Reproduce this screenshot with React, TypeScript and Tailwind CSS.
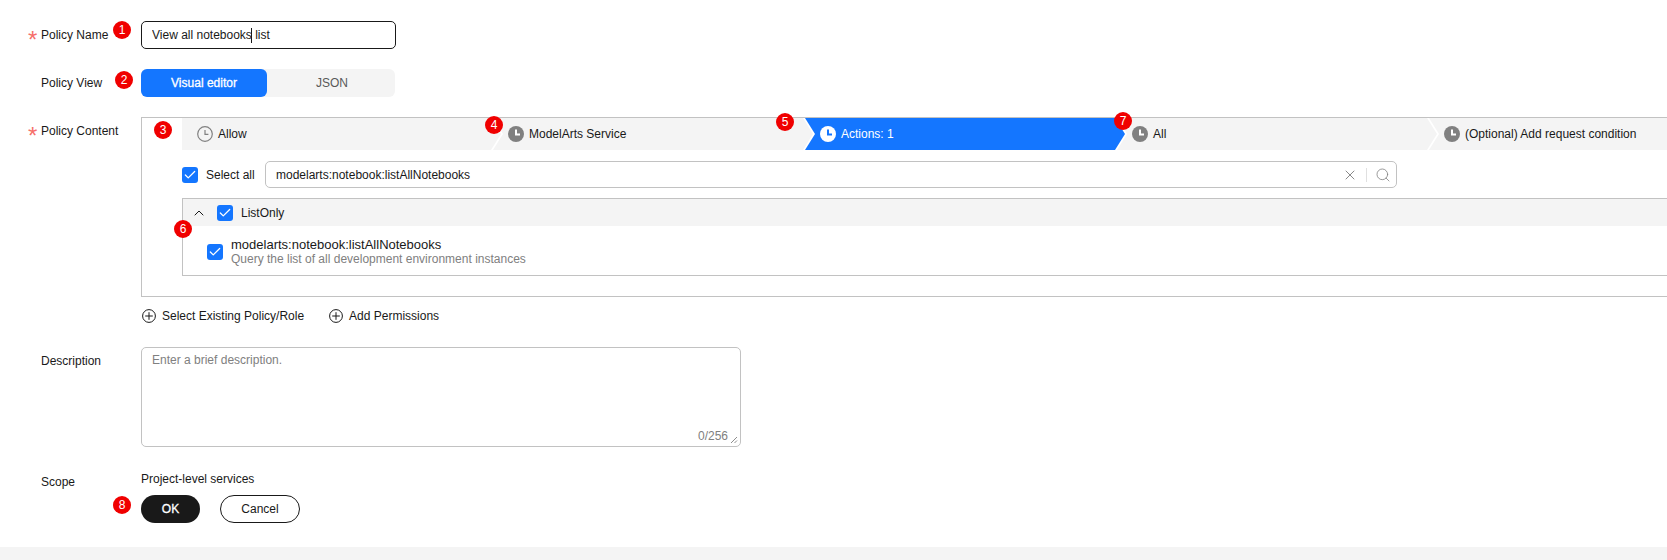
import { Check, ChevronUp, Search, X } from "lucide-react";

const NOTCHED =
  "[clip-path:polygon(0_0,calc(100%_-_10px)_0,100%_50%,calc(100%_-_10px)_100%,0_100%,10px_50%)]";
const FIRST =
  "[clip-path:polygon(0_0,calc(100%_-_10px)_0,100%_50%,calc(100%_-_10px)_100%,0_100%)]";

// Numbered callouts laid over the form
const badges = [
  { n: 1, cls: "left-[113px] top-[21px]" },
  { n: 2, cls: "left-[115px] top-[71px]" },
  { n: 3, cls: "left-[154px] top-[121px]" },
  { n: 4, cls: "left-[485px] top-[116px]" },
  { n: 5, cls: "left-[776px] top-[113px]" },
  { n: 6, cls: "left-[174px] top-[220px]" },
  { n: 7, cls: "left-[1114px] top-[112px]" },
  { n: 8, cls: "left-[113px] top-[496px]" },
];

const Clock = ({ variant = "filled" }: { variant?: "filled" | "outline" | "active" }) => {
  if (variant === "outline") {
    return (
      <svg width="16" height="16" viewBox="0 0 16 16" fill="none" className="shrink-0">
        <circle cx="8" cy="8" r="7.3" stroke="#808080" strokeWidth="1.2" />
        <path d="M8 4v4.4h3.4" stroke="#808080" strokeWidth="1.2" />
      </svg>
    );
  }
  const active = variant === "active";
  return (
    <svg width="16" height="16" viewBox="0 0 16 16" fill="none" className="shrink-0">
      <circle cx="8" cy="8" r="8" fill={active ? "#ffffff" : "#808080"} />
      <path d="M8 3.6v5h4" stroke={active ? "#1476ff" : "#ffffff"} strokeWidth="2" />
    </svg>
  );
};

const Checkbox = () => (
  <span className="flex h-4 w-4 shrink-0 items-center justify-center rounded-[3px] bg-[#1476ff]">
    <Check size={14} color="#ffffff" strokeWidth={2.2} />
  </span>
);

const PlusCircle = () => (
  <svg width="14" height="14" viewBox="0 0 14 14" fill="none" className="shrink-0">
    <circle cx="7" cy="7" r="6.4" stroke="#191919" strokeWidth="1" />
    <path d="M7 3.2v7.6M3.2 7h7.6" stroke="#191919" strokeWidth="1" />
  </svg>
);

const Label = ({ text, required }: { text: string; required?: boolean }) => (
  <div className="flex w-[141px] shrink-0 pl-[28px]">
    <span className="flex w-[13px] shrink-0 justify-start text-[24px] leading-[18px] text-[#f66f6a]">
      {required ? <span className="translate-y-[5px]">*</span> : null}
    </span>
    <span className="leading-[18px]">{text}</span>
  </div>
);

const Steps = () => (
  <div className="flex h-8 pl-10">
    <div className={`-mr-2 flex w-[319px] shrink-0 items-center gap-[5px] bg-[#f4f4f4] pl-[15px] ${FIRST}`}>
      <Clock variant="outline" />
      <span>Allow</span>
    </div>
    <div className={`-mr-2 flex w-[320px] shrink-0 items-center gap-[5px] bg-[#f4f4f4] pl-[15px] ${NOTCHED}`}>
      <Clock />
      <span>ModelArts Service</span>
    </div>
    <div className={`-mr-2 flex w-[320px] shrink-0 items-center gap-[5px] bg-[#1476ff] pl-[15px] text-white ${NOTCHED}`}>
      <Clock variant="active" />
      <span>Actions: 1</span>
    </div>
    <div className={`-mr-2 flex w-[320px] shrink-0 items-center gap-[5px] bg-[#f4f4f4] pl-[15px] ${NOTCHED}`}>
      <Clock />
      <span>All</span>
    </div>
    <div className={`-mr-2 flex w-[320px] shrink-0 items-center gap-[5px] bg-[#f4f4f4] pl-[15px] ${NOTCHED}`}>
      <Clock />
      <span>(Optional) Add request condition</span>
    </div>
  </div>
);

export default function App() {
  return (
    <div className="relative flex h-[560px] flex-col overflow-hidden bg-white font-['Liberation_Sans',Arial,sans-serif] text-[12px] text-[#191919]">
      <main className="flex-1 pt-[21px]">
        {/* Policy name */}
        <div className="flex items-center">
          <Label text="Policy Name" required />
          <div className="relative h-7 w-[255px]">
            <input
              readOnly
              value="View all notebooks list"
              className="h-full w-full rounded-[5px] border border-[#191919] pl-[10px] outline-none"
            />
            <span className="absolute left-[110px] top-[7px] h-[15px] w-px bg-[#191919]" />
          </div>
        </div>

        {/* Policy view */}
        <div className="mt-5 flex items-center">
          <Label text="Policy View" />
          <div className="flex h-7 w-[254px] gap-[2px] rounded-[6px] bg-[#f4f4f4]">
            <button className="h-full w-[126px] rounded-[6px] bg-[#1476ff] text-white [-webkit-text-stroke:0.3px_#ffffff]">Visual editor</button>
            <button className="h-full flex-1 text-[#595959]">JSON</button>
          </div>
        </div>

        {/* Policy content */}
        <div className="mt-5 flex">
          <div className="pt-[5px]">
            <Label text="Policy Content" required />
          </div>
          <div className="-mr-[40px] h-[180px] min-w-0 flex-1 overflow-hidden border border-[#c2c2c2]">
            <Steps />
            <div className="mt-[11px] flex h-[27px] items-center pl-10">
              <Checkbox />
              <span className="ml-[8px] w-[59px] shrink-0">Select all</span>
              <div className="flex h-full w-[1132px] items-center rounded-[5px] border border-[#c2c2c2] pl-[10px] pr-[4px]">
                <span className="flex-1">modelarts:notebook:listAllNotebooks</span>
                <X size={16} color="#6b6b6b" strokeWidth={1.2} />
                <span className="mx-[8px] h-[14px] w-px bg-[#e0e0e0]" />
                <Search size={16} color="#808080" strokeWidth={1.2} className="mr-[1px]" />
              </div>
            </div>
            <div className="ml-10 mt-[10px] h-[78px] border border-[#c2c2c2]">
              <div className="flex h-[27px] items-center bg-[#f4f4f4] pl-[8px]">
                <ChevronUp size={16} color="#191919" strokeWidth={1.5} />
                <span className="ml-[10px]"><Checkbox /></span>
                <span className="ml-2">ListOnly</span>
              </div>
              <div className="flex items-center pl-6 pt-[11px]">
                <Checkbox />
                <div className="ml-2">
                  <div className="text-[13px] leading-[15px]">modelarts:notebook:listAllNotebooks</div>
                  <div className="leading-[14px] text-[#808080]">Query the list of all development environment instances</div>
                </div>
              </div>
            </div>
          </div>
        </div>

        {/* Extra actions */}
        <div className="ml-[142px] mt-[11px] flex h-4 items-center">
          <PlusCircle />
          <span className="ml-[6px]">Select Existing Policy/Role</span>
          <span className="ml-[25px]"><PlusCircle /></span>
          <span className="ml-[6px]">Add Permissions</span>
        </div>

        {/* Description */}
        <div className="mt-[23px] flex">
          <div className="pt-[5px]">
            <Label text="Description" />
          </div>
          <div className="relative h-[100px] w-[600px]">
            <textarea
              readOnly
              placeholder="Enter a brief description."
              className="h-full w-full resize-none rounded-[5px] border border-[#c2c2c2] px-[10px] py-[3px] leading-[18px] outline-none placeholder:text-[#808080]"
            />
            <span className="absolute bottom-[2px] right-[13px] text-[#808080]">0/256</span>
            <svg width="8" height="8" viewBox="0 0 8 8" fill="none" className="absolute bottom-[3px] right-[3px]">
              <path d="M1 7l6-6M4.5 7L7 4.5" stroke="#808080" strokeWidth="0.9" />
            </svg>
          </div>
        </div>

        {/* Scope and buttons */}
        <div className="mt-[23px] flex">
          <div className="pt-[3px]">
            <Label text="Scope" />
          </div>
          <div>
            <div className="leading-[18px]">Project-level services</div>
            <div className="mt-[7px] flex gap-5">
              <button className="h-7 w-[59px] rounded-full bg-[#191919] text-white [-webkit-text-stroke:0.3px_#ffffff]">OK</button>
              <button className="h-7 w-[80px] rounded-full border border-[#191919]">Cancel</button>
            </div>
          </div>
        </div>
      </main>

      <div className="h-[13px] bg-[#f4f4f4]" />

      {badges.map((b) => (
        <span
          key={b.n}
          className={`absolute flex h-[18px] w-[18px] items-center justify-center rounded-full bg-[#f00000] text-[12px] text-white ${b.cls}`}
        >
          {b.n}
        </span>
      ))}
    </div>
  );
}
